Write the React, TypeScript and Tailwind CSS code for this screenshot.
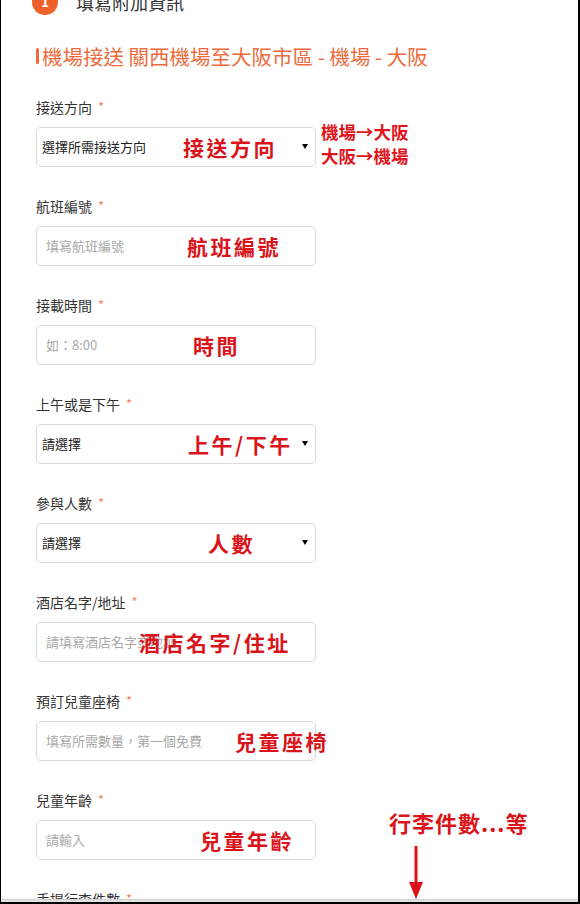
import React from 'react';

// --- Types ---
interface Field {
  label: string;
  placeholder: string;
  kind: 'select' | 'input';
  note: string;
  noteLeft: string;
}

const FIELDS: Field[] = [
  { label: '接送方向', placeholder: '選擇所需接送方向', kind: 'select', note: '接送方向', noteLeft: 'left-[146px]' },
  { label: '航班編號', placeholder: '填寫航班編號', kind: 'input', note: '航班編號', noteLeft: 'left-[150px]' },
  { label: '接載時間', placeholder: '如：8:00', kind: 'input', note: '時間', noteLeft: 'left-[156px]' },
  { label: '上午或是下午', placeholder: '請選擇', kind: 'select', note: '上午/下午', noteLeft: 'left-[151px]' },
  { label: '參與人數', placeholder: '請選擇', kind: 'select', note: '人數', noteLeft: 'left-[171px]' },
  { label: '酒店名字/地址', placeholder: '請填寫酒店名字或地址', kind: 'input', note: '酒店名字/住址', noteLeft: 'left-[102px]' },
  { label: '預訂兒童座椅', placeholder: '填寫所需數量，第一個免費', kind: 'input', note: '兒童座椅', noteLeft: 'left-[198px]' },
  { label: '兒童年齡', placeholder: '請輸入', kind: 'input', note: '兒童年齡', noteLeft: 'left-[163px]' },
];

const FONT = "font-['Microsoft_JhengHei','Noto_Sans_CJK_TC',sans-serif]";

const App: React.FC = () => {
  return (
    <div className={`w-[580px] h-[904px] bg-white overflow-hidden relative border-l border-r-2 border-b-2 border-black ${FONT}`}>
      {/* --- STEP HEADER (cut off at top) --- */}
      <div className="flex items-center -mt-[11px] pl-[31px] h-[26px]">
        <div className="w-[26px] h-[26px] rounded-full bg-[#f0602a] flex items-center justify-center text-white text-[13px] font-bold">1</div>
        <div className="ml-[18px] text-[18px] text-[#333]">填寫附加資訊</div>
      </div>

      {/* --- SECTION TITLE --- */}
      <div className="flex items-center mt-[27px] pl-[35px] h-[28px]">
        <span className="w-[3px] h-[16px] rounded-sm bg-[#ee6a3c] mr-[3px]"></span>
        <span className="text-[20.5px] text-[#ec6b3d] whitespace-nowrap">機場接送 關西機場至大阪市區 - 機場 - 大阪</span>
      </div>

      {/* --- FORM FIELDS --- */}
      <div className="mt-[27px] pl-[35px]">
        {FIELDS.map((f, i) => (
          <div key={f.label} className="h-[99px]">
            <div className="h-[20px] flex items-center text-[14px] text-[#333]">
              {f.label}
              <span className="ml-[6px] text-[#f0876a] text-[13px]">*</span>
            </div>
            <div className="mt-[10px] flex items-start">
              <div className="relative w-[280px] h-[40px] border border-[#dcdcdc] rounded-[5px] flex items-center">
                {f.kind === 'select' ? (
                  <>
                    <span className="pl-[5px] text-[13px] text-[#222]">{f.placeholder}</span>
                    <span className="absolute right-[7px] top-[16px] w-0 h-0 border-l-[3px] border-r-[3px] border-t-[5px] border-l-transparent border-r-transparent border-t-black"></span>
                  </>
                ) : (
                  <span className="pl-[9px] text-[13px] text-[#a8a8a8]">{f.placeholder}</span>
                )}
                <span className={`absolute ${f.noteLeft} top-[5px] text-[21px] leading-[28px] font-bold tracking-[2.5px] text-[#d9141b] whitespace-nowrap`}>
                  {f.note}
                </span>
              </div>
              {i === 0 && (
                <div className="ml-[5px] -mt-[7px] text-[17.5px] leading-[24px] font-bold text-[#e0141b] whitespace-nowrap">
                  <div>機場→大阪</div>
                  <div>大阪→機場</div>
                </div>
              )}
            </div>
          </div>
        ))}
        <div className="h-[20px] flex items-center text-[14px] text-[#333]">
          手提行李件數
          <span className="ml-[6px] text-[#f0876a] text-[13px]">*</span>
        </div>
      </div>

      {/* --- ANNOTATION: MORE FIELDS BELOW --- */}
      <div className="absolute left-[388px] top-[808px] text-[22px] leading-[28px] font-bold tracking-[1px] text-[#d9141b] whitespace-nowrap">
        行李件數...等
      </div>
      <svg className="absolute left-[405px] top-[846px]" width="20" height="54" viewBox="0 0 20 54">
        <rect x="8.5" y="0" width="3" height="40" fill="#d9141b" />
        <polygon points="3,36 17,36 10,53" fill="#d9141b" />
      </svg>

      {/* bottom scrollbar edge */}
      <div className="absolute left-0 right-0 bottom-0 h-[3px] bg-[#e2e2e2] border-t border-[#d0d0d0]"></div>
    </div>
  );
};

export default App;
